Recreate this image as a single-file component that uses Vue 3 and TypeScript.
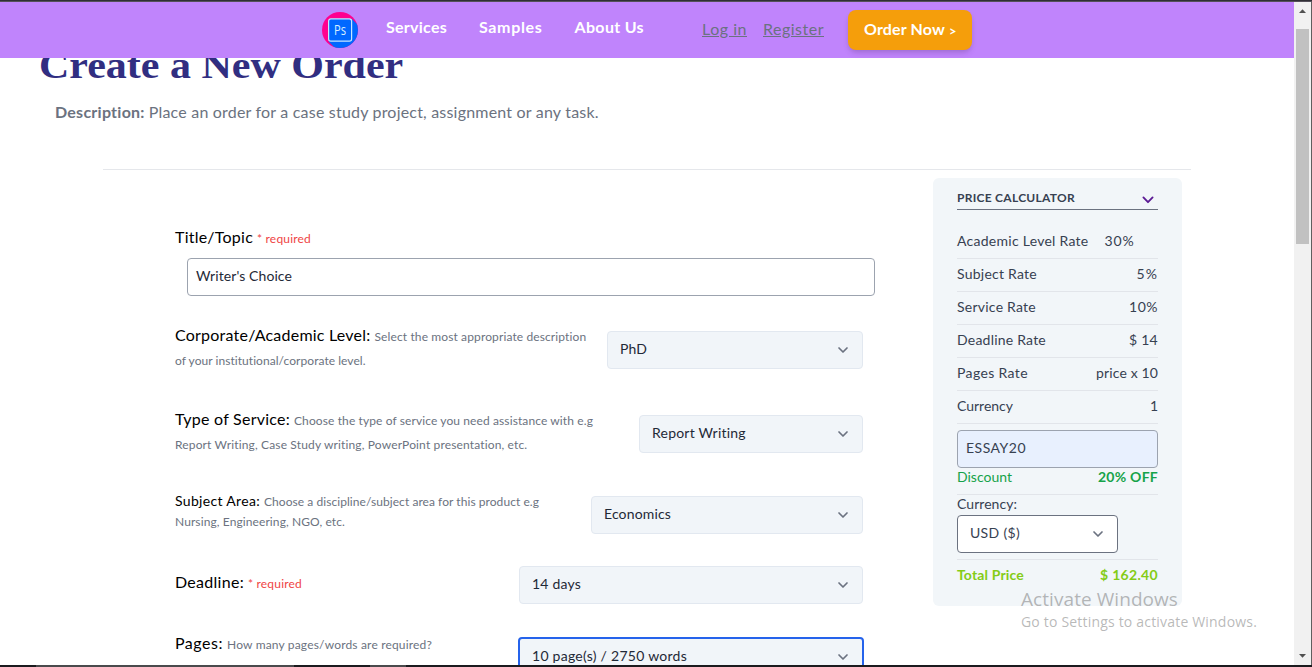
<script setup lang="ts">
import type { Directive } from 'vue'

interface Line {
  text: string
  width: number
}

interface Field {
  key: string
  label: Line
  hints: Line[]
  required?: Line
  value: Line
}

interface Rate {
  label: Line
  value: Line
  inline?: boolean
}

// Tracks the letters of a label so that it fills its intended measure.
const vMeasure: Directive<HTMLElement, number> = {
  mounted(el, { value }) {
    const count = (el.textContent ?? '').length
    const natural = el.getBoundingClientRect().width
    if (count > 1) el.style.letterSpacing = `${((value - natural) / count).toFixed(3)}px`
  },
}

const links: Line[] = [
  { text: 'Services', width: 61 },
  { text: 'Samples', width: 63.5 },
  { text: 'About Us', width: 69.5 },
]

const fields: Field[] = [
  {
    key: 'level',
    label: { text: 'Corporate/Academic Level:', width: 195.5 },
    hints: [
      { text: 'Select the most appropriate description', width: 212 },
      { text: 'of your institutional/corporate level.', width: 191 },
    ],
    value: { text: 'PhD', width: 27 },
  },
  {
    key: 'service',
    label: { text: 'Type of Service:', width: 115 },
    hints: [
      { text: 'Choose the type of service you need assistance with e.g', width: 299 },
      { text: 'Report Writing, Case Study writing, PowerPoint presentation, etc.', width: 353 },
    ],
    value: { text: 'Report Writing', width: 94 },
  },
  {
    key: 'subject',
    label: { text: 'Subject Area:', width: 85 },
    hints: [
      { text: 'Choose a discipline/subject area for this product e.g', width: 275 },
      { text: 'Nursing, Engineering, NGO, etc.', width: 170 },
    ],
    value: { text: 'Economics', width: 67 },
  },
  {
    key: 'deadline',
    label: { text: 'Deadline:', width: 69 },
    hints: [],
    required: { text: '* required', width: 54 },
    value: { text: '14 days', width: 49 },
  },
  {
    key: 'pages',
    label: { text: 'Pages:', width: 48 },
    hints: [{ text: 'How many pages/words are required?', width: 205 }],
    value: { text: '10 page(s) / 2750 words', width: 155 },
  },
]

const rates: Rate[] = [
  { label: { text: 'Academic Level Rate', width: 131.5 }, value: { text: '30%', width: 30 }, inline: true },
  { label: { text: 'Subject Rate', width: 80 }, value: { text: '5%', width: 21.5 } },
  { label: { text: 'Service Rate', width: 79 }, value: { text: '10%', width: 29 } },
  { label: { text: 'Deadline Rate', width: 89 }, value: { text: '$ 14', width: 29 } },
  { label: { text: 'Pages Rate', width: 71 }, value: { text: 'price x 10', width: 62 } },
  { label: { text: 'Currency', width: 56 }, value: { text: '1', width: 8 } },
]
</script>

<template>
  <div class="window">
    <div class="edge-top"></div>
    <div class="view">
      <div class="page">
        <header class="bar">
          <svg class="logo" viewBox="0 0 36 36" width="36" height="36">
            <defs>
              <clipPath id="disc"><circle cx="18" cy="18" r="18" /></clipPath>
            </defs>
            <g clip-path="url(#disc)">
              <rect width="36" height="36" fill="#ff0090" />
              <path d="M6.5 29.5 29.5 6.5 42 19V42H19Z" fill="#0068ff" />
            </g>
            <rect x="6.6" y="6.8" width="23" height="22.4" rx="2.2" fill="#0068ff" stroke="#c6e6ff" stroke-width="1.2" />
            <text x="18" y="23" text-anchor="middle" class="logo-text" textLength="12" lengthAdjust="spacingAndGlyphs">Ps</text>
          </svg>
          <nav class="links">
            <a v-for="link in links" :key="link.text"><span v-measure="link.width">{{ link.text }}</span></a>
          </nav>
          <div class="account">
            <a><span v-measure="45">Log in</span></a>
            <a><span v-measure="61">Register</span></a>
          </div>
          <button class="order"><span v-measure="81">Order Now</span><span class="gt">&gt;</span></button>
        </header>

        <main class="main">
          <h1 class="heading">Create a New Order</h1>
          <p class="lead"><b v-measure="90">Description:</b><span v-measure="450">Place an order for a case study project, assignment or any task.</span></p>
          <hr class="rule" />
          <div class="columns">
            <form class="form" @submit.prevent>
              <div class="label"><span v-measure="78">Title/Topic</span><span v-measure="54" class="required">* required</span></div>
              <div class="topic"><span v-measure="96">Writer's Choice</span></div>
              <div v-for="field in fields" :key="field.key" class="row" :class="field.key">
                <div class="label">
                  <span v-measure="field.label.width">{{ field.label.text }}</span>
                  <span v-if="field.required" v-measure="field.required.width" class="required">{{ field.required.text }}</span>
                  <template v-for="(hint, i) in field.hints" :key="hint.text">
                    <br v-if="i > 0" /><span v-measure="hint.width" class="hint" :class="{ next: i > 0 }">{{ hint.text }}</span>
                  </template>
                </div>
                <div class="select">
                  <span v-measure="field.value.width">{{ field.value.text }}</span>
                  <svg class="chevron" viewBox="0 0 20 20"><path d="M6 8l4 4 4-4" /></svg>
                </div>
              </div>
            </form>

            <aside class="calc">
              <div class="calc-head">
                <span v-measure="118">PRICE CALCULATOR</span>
                <svg class="chevron violet" viewBox="0 0 20 20"><path d="M5.4 7.4l4.6 4.8 4.6-4.8" /></svg>
              </div>
              <div v-for="rate in rates" :key="rate.label.text" class="rate" :class="{ inline: rate.inline }">
                <span v-measure="rate.label.width">{{ rate.label.text }}</span>
                <span v-measure="rate.value.width">{{ rate.value.text }}</span>
              </div>
              <div class="coupon"><span v-measure="60">ESSAY20</span></div>
              <div class="discount"><span v-measure="55">Discount</span><b v-measure="60">20% OFF</b></div>
              <div class="currency-label"><span v-measure="60">Currency:</span></div>
              <div class="select currency">
                <span v-measure="50">USD ($)</span>
                <svg class="chevron" viewBox="0 0 20 20"><path d="M6 8l4 4 4-4" /></svg>
              </div>
              <div class="total"><b v-measure="67">Total Price</b><b v-measure="58">$ 162.40</b></div>
            </aside>
          </div>
        </main>
      </div>
      <div class="scroll">
        <svg width="17" height="27" viewBox="0 0 17 27"><path d="M5 11h7L8.5 7.2z" fill="#505050" /></svg>
        <div class="thumb"></div>
        <svg class="down" width="17" height="17" viewBox="0 0 17 17"><path d="M5 6h7L8.5 9.8z" fill="#505050" /></svg>
      </div>
      <div class="edge-right"></div>
    </div>
    <div class="edge-bottom"><i></i><i></i><i></i><i></i></div>
    <div class="watermark">
      <div class="wm-title"><span v-measure="157">Activate Windows</span></div>
      <div class="wm-text"><span v-measure="236">Go to Settings to activate Windows.</span></div>
    </div>
  </div>
</template>

<style>
body {
  margin: 0;
  overflow: hidden;
}
</style>

<style scoped>
* {
  box-sizing: border-box;
}
.window {
  position: relative;
  display: grid;
  grid-template-rows: 2px 663px 2px;
  width: 1312px;
  height: 667px;
  overflow: hidden;
  background: #fff;
  font-family: Lato, 'Open Sans', sans-serif;
  font-size: 14px;
  line-height: 20px;
  color: #1f2937;
  white-space: nowrap;
}
.edge-top {
  background: #302f35;
  border-bottom: 1px solid #55505a;
}
.view {
  display: grid;
  grid-template-columns: 1294px 17px 1px;
  min-height: 0;
}
.page {
  height: 663px;
  overflow: hidden;
}
.bar {
  display: flex;
  height: 56px;
  padding-left: 322px;
  background: #c084fc;
  font-size: 16px;
  line-height: 24px;
}
.logo {
  margin-top: 10px;
}
.logo-text {
  font: 14px 'Open Sans', sans-serif;
  fill: #d8efff;
}
.links {
  display: flex;
  gap: 32px;
  width: 257px;
  margin: 13px 0 0 28px;
  color: #fff;
  font-weight: 700;
}
.account {
  display: flex;
  gap: 16px;
  margin: 15px 0 0 59px;
  color: #6b7280;
}
.account a {
  text-decoration: underline;
}
.order {
  display: flex;
  align-items: center;
  gap: 4px;
  width: 124px;
  height: 40px;
  margin: 8px 0 0 24px;
  padding: 0 0 2px 16px;
  border: 0;
  border-radius: 8px;
  background: #f59e0b;
  box-shadow: 0 4px 6px -1px rgba(0, 0, 0, 0.12), 0 2px 4px -1px rgba(0, 0, 0, 0.08);
  color: #fff;
  font: 700 16px/24px Lato, sans-serif;
}
.gt {
  padding-top: 3px;
  font-size: 13px;
}
.main {
  height: 607px;
  overflow: hidden;
}
.heading {
  width: max-content;
  height: 40px;
  margin: -13px 0 0 39px;
  color: #312e81;
  font: 700 38px/40px 'Liberation Serif', serif;
  transform: scaleX(1.105);
  transform-origin: left;
}
.lead {
  display: flex;
  gap: 4px;
  height: 24px;
  margin: 15px 0 0 55px;
  color: #6b7280;
  font-size: 16px;
  line-height: 24px;
}
.rule {
  width: 1088px;
  height: 1px;
  margin: 45px 0 0 103px;
  border: 0;
  background: #e5e7eb;
}
.columns {
  display: flex;
}
.form {
  width: 700px;
  margin: 55px 0 0 175px;
}
.label {
  color: #000;
  font-size: 16px;
  line-height: 24px;
}
.required,
.hint {
  margin-left: 4px;
  color: #ef4444;
  font-size: 12px;
  line-height: 12px;
}
.hint {
  color: #6b7280;
}
.hint.next {
  margin-left: 0;
}
.topic {
  display: flex;
  align-items: center;
  width: 688px;
  height: 38px;
  margin: 9px 0 35px 12px;
  padding: 0 8px 2px;
  border: 1px solid #9ca3af;
  border-radius: 4px;
}
.row {
  display: flex;
  justify-content: space-between;
  align-items: flex-start;
  width: 688px;
  height: 84px;
}
.select {
  display: flex;
  align-items: center;
  justify-content: space-between;
  width: 256px;
  height: 38px;
  padding: 0 9px 2px 12px;
  border: 1px solid #e2e8f0;
  border-radius: 4px;
  background: #f1f5f9;
}
.chevron {
  width: 20px;
  height: 20px;
  margin-top: 2px;
  fill: none;
  stroke: #6b7280;
  stroke-width: 1.7;
  stroke-linecap: round;
  stroke-linejoin: round;
}
.level .label,
.service .label {
  margin-top: -8px;
}
.service {
  height: 81px;
}
.service .select {
  width: 224px;
}
.subject {
  height: 70px;
}
.subject .label {
  margin-top: -5px;
  font-size: 14px;
  line-height: 20px;
}
.subject .select {
  width: 272px;
}
.deadline {
  height: 72px;
}
.deadline .label {
  margin-top: 4px;
}
.deadline .select {
  width: 344px;
}
.pages .label {
  margin-top: -7px;
}
.pages .select {
  width: 346px;
  height: 40px;
  margin: -1px -1px 0 0;
  border: 2px solid #2563eb;
}
.calc {
  width: 249px;
  height: 428px;
  margin: 8px 0 0 58px;
  padding: 8px 24px;
  border-radius: 6px;
  background: #f2f6f9;
  color: #374151;
}
.calc-head {
  display: flex;
  align-items: center;
  justify-content: space-between;
  height: 24px;
  margin-bottom: 16px;
  border-bottom: 1px solid #6b7280;
  font-size: 12px;
  font-weight: 700;
}
.violet {
  margin-top: 4px;
  stroke: #5b1a94;
  stroke-width: 1.8;
}
.rate {
  display: flex;
  justify-content: space-between;
  height: 33px;
  padding-top: 5px;
  border-bottom: 1px solid #e2e5ea;
}
.rate.inline {
  justify-content: flex-start;
  gap: 16px;
}
.coupon {
  display: flex;
  align-items: center;
  height: 38px;
  margin-top: 6px;
  padding: 0 8px 2px;
  border: 1px solid #9ca3af;
  border-radius: 4px;
  background: #e8f0fe;
}
.discount {
  display: flex;
  justify-content: space-between;
  height: 27px;
  border-bottom: 1px solid #e2e5ea;
  color: #16a34a;
  line-height: 18px;
}
.currency-label {
  height: 20px;
  line-height: 18px;
}
.currency {
  width: 161px;
  border-color: #6b7280;
  background: #fff;
}
.total {
  display: flex;
  justify-content: space-between;
  margin-top: 6px;
  padding-top: 5px;
  border-top: 1px solid #e2e5ea;
  color: #84cc16;
}
.scroll {
  display: flex;
  flex-direction: column;
  background: #f1f1f1;
}
.thumb {
  width: 13px;
  height: 215px;
  margin-left: 2px;
  background: #c1c1c1;
}
.down {
  margin-top: auto;
}
.edge-right {
  background: #5f5f5f;
}
.edge-bottom {
  display: grid;
  grid-template-columns: 36px 258px 76px 36px;
  background: #1b1b1e;
}
.edge-bottom i:nth-child(even) {
  background: #4a4a4c;
}
.watermark {
  position: absolute;
  left: 1021px;
  top: 586px;
  color: rgba(125, 125, 125, 0.55);
  font-family: 'Open Sans', sans-serif;
}
.wm-title {
  font-size: 19px;
  line-height: 26px;
}
.wm-text {
  font-size: 14px;
  line-height: 19px;
}
</style>
